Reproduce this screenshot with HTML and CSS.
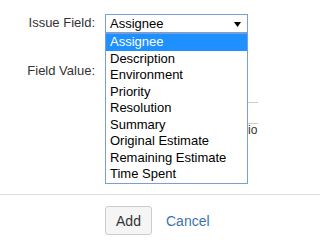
FILE: index.html
```html
<!DOCTYPE html>
<html>
<head>
<meta charset="utf-8">
<link rel="stylesheet" href="styles.css">
</head>
<body>
<form class="form">
  <div class="field">
    <label class="field-label">Issue Field:</label>
    <div class="control">
      <div class="select">
        <span class="select-value">Assignee</span>
        <svg class="arrow" width="7" height="5" viewBox="0 0 7 5"><polygon points="0,0 7,0 3.5,5" fill="#000"/></svg>
      </div>
      <ul class="dropdown">
        <li class="option selected">Assignee</li>
        <li class="option">Description</li>
        <li class="option">Environment</li>
        <li class="option">Priority</li>
        <li class="option">Resolution</li>
        <li class="option">Summary</li>
        <li class="option">Original Estimate</li>
        <li class="option">Remaining Estimate</li>
        <li class="option">Time Spent</li>
      </ul>
    </div>
  </div>
  <div class="field field-second">
    <label class="field-label">Field Value:</label>
    <div class="value">
      <div class="value-spacer"></div>
      <div class="value-row"></div>
      <div class="value-row value-text">io</div>
    </div>
  </div>
  <div class="footer">
    <button type="button" class="btn">Add</button>
    <a class="cancel" href="#">Cancel</a>
  </div>
</form>
</body>
</html>
```

FILE: styles.css
```css
html, body {
  margin: 0;
  padding: 0;
  background: #fff;
  overflow: hidden;
}
body {
  font-family: "Liberation Sans", Arial, sans-serif;
  font-size: 13px;
  color: #333;
}
.form {
  margin: 0;
  padding-top: 14px;
}
.field {
  display: flex;
  align-items: flex-start;
  gap: 10px;
}
.field-second {
  margin-top: 29px;
}
.field-label {
  width: 95px;
  text-align: right;
  line-height: 17px;
  font-size: 13px;
  color: #333;
}
.control {
  position: relative;
  width: 143px;
}
.select {
  box-sizing: border-box;
  height: 19px;
  border: 1px solid #7a9fd6;
  display: flex;
  align-items: center;
  justify-content: space-between;
  padding: 0 6px 0 4px;
  line-height: 17px;
  font-size: 13px;
  color: #000;
  background: #fff;
}
.arrow {
  display: block;
  margin-top: 1px;
}
.dropdown {
  position: absolute;
  top: 100%;
  left: 0;
  width: 100%;
  box-sizing: border-box;
  margin: 0;
  padding: 0;
  list-style: none;
  border: 1px solid #7a9fd6;
  background: #fff;
  z-index: 2;
}
.option {
  line-height: 16.5px;
  padding-left: 4px;
  font-size: 13px;
  color: #000;
  white-space: nowrap;
}
.option.selected {
  background: #1e90ff;
  color: #fff;
}
.value {
  width: 153px;
}
.value-spacer {
  height: 40px;
}
.value-row {
  border-top: 1px solid #ccc;
  height: 20px;
}
.value-text {
  height: auto;
  font-size: 12px;
  line-height: 12px;
  padding-left: 143px;
  color: #333;
}
.footer {
  margin-top: 58px;
  border-top: 1px solid #ddd;
  padding: 11px 0 0 105px;
  display: flex;
  align-items: center;
  gap: 14px;
}
.btn {
  box-sizing: border-box;
  width: 47px;
  height: 29px;
  border: 1px solid #ccc;
  border-radius: 3px;
  background: #f5f5f5;
  color: #333;
  font-family: "Liberation Sans", Arial, sans-serif;
  font-size: 14px;
  padding: 0;
}
.cancel {
  color: #3b73af;
  text-decoration: none;
  font-size: 14px;
}
```
